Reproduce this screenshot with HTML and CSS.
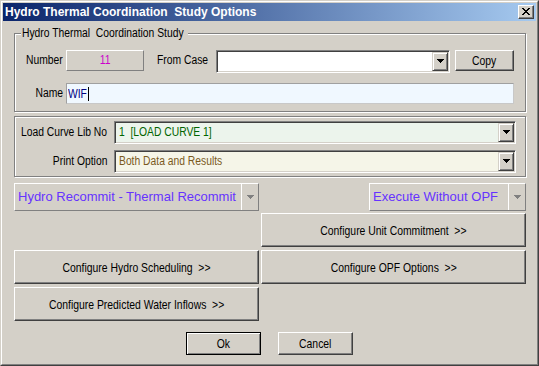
FILE: index.html
```html
<!DOCTYPE html>
<html>
<head>
<meta charset="utf-8">
<title>Hydro Thermal Coordination Study Options</title>
<link rel="stylesheet" href="styles.css">
</head>
<body>
<div class="window">
  <div class="frame">
    <div class="titlebar">
      <span class="title">Hydro Thermal Coordination  Study Options</span>
      <div class="close">
        <svg width="8" height="7" viewBox="0 0 8 7" shape-rendering="crispEdges"><path d="M0 0h2v1H0zM6 0h2v1H6zM1 1h2v1H1zM5 1h2v1H5zM2 2h4v1H2zM3 3h2v1H3zM2 4h4v1H2zM1 5h2v1H1zM5 5h2v1H5zM0 6h2v1H0zM6 6h2v1H6z" fill="#000"/></svg>
      </div>
    </div>
    <div class="content">
      <div class="group g1">
        <span class="legend"><span class="nx ol">Hydro Thermal  Coordination Study</span></span>
        <div class="row r1">
          <span class="lbl lbl-left"><span class="nx or">Number</span></span>
          <div class="static"><span class="nx oc">11</span></div>
          <span class="lbl lbl-from"><span class="nx ol">From Case</span></span>
          <div class="combo case-combo">
            <div class="field white"></div>
            <div class="dd"><svg width="7" height="4" viewBox="0 0 7 4" shape-rendering="crispEdges"><path d="M0 0h7v1H0zM1 1h5v1H1zM2 2h3v1H2zM3 3h1v1H3z" fill="#000"/></svg></div>
          </div>
          <div class="btn copy"><span class="nb oc">Copy</span></div>
        </div>
        <div class="row r2">
          <span class="lbl lbl-left"><span class="nx or">Name</span></span>
          <div class="textbox"><span class="nx ol typed">WIF</span><span class="caret"></span></div>
        </div>
      </div>

      <div class="group g2">
        <div class="row r3">
          <span class="lbl lbl-wide"><span class="nx or">Load Curve Lib No</span></span>
          <div class="combo wide-combo">
            <div class="field green"><span class="nx ol">1  [LOAD CURVE 1]</span></div>
            <div class="dd"><svg width="7" height="4" viewBox="0 0 7 4" shape-rendering="crispEdges"><path d="M0 0h7v1H0zM1 1h5v1H1zM2 2h3v1H2zM3 3h1v1H3z" fill="#000"/></svg></div>
          </div>
        </div>
        <div class="row r4">
          <span class="lbl lbl-wide"><span class="nx or">Print Option</span></span>
          <div class="combo wide-combo">
            <div class="field yellow"><span class="nx ol">Both Data and Results</span></div>
            <div class="dd"><svg width="7" height="4" viewBox="0 0 7 4" shape-rendering="crispEdges"><path d="M0 0h7v1H0zM1 1h5v1H1zM2 2h3v1H2zM3 3h1v1H3z" fill="#000"/></svg></div>
          </div>
        </div>
      </div>

      <div class="flatrow">
        <div class="flat hydro">
          <span class="flat-text">Hydro Recommit - Thermal Recommit</span>
          <div class="flat-arrow"><svg width="7" height="4" viewBox="0 0 7 4" shape-rendering="crispEdges"><path d="M0 0h7v1H0zM1 1h5v1H1zM2 2h3v1H2zM3 3h1v1H3z" fill="#808080"/></svg></div>
        </div>
        <div class="flat exec">
          <span class="flat-text">Execute Without OPF</span>
          <div class="flat-arrow"><svg width="7" height="4" viewBox="0 0 7 4" shape-rendering="crispEdges"><path d="M0 0h7v1H0zM1 1h5v1H1zM2 2h3v1H2zM3 3h1v1H3z" fill="#808080"/></svg></div>
        </div>
      </div>

      <div class="cfg-grid">
        <div class="btn cfg cfg-unit"><span class="nb oc">Configure Unit Commitment  &gt;&gt;</span></div>
        <div class="btn cfg"><span class="nb oc">Configure Hydro Scheduling  &gt;&gt;</span></div>
        <div class="btn cfg"><span class="nb oc">Configure OPF Options  &gt;&gt;</span></div>
        <div class="btn cfg"><span class="nb oc">Configure Predicted Water Inflows  &gt;&gt;</span></div>
      </div>

      <div class="actions">
        <div class="btn action default"><span class="nb oc">Ok</span></div>
        <div class="btn action"><span class="nb oc">Cancel</span></div>
      </div>
    </div>
  </div>
</div>
</body>
</html>
```

FILE: styles.css
```css
html, body {
  margin: 0;
  padding: 0;
  background: #d4d0c8;
}

.window {
  width: 539px;
  height: 366px;
  box-sizing: border-box;
  border: 1px solid;
  border-color: #d4d0c8 #404040 #404040 #d4d0c8;
  background: #d4d0c8;
  font-family: "Liberation Sans", Arial, sans-serif;
  font-size: 12px;
  color: #000;
}

/* narrow (MS Sans Serif-like) text */
.nx, .nb {
  display: inline-block;
  white-space: pre;
  flex: none;
}

.nx {
  font-size: 12px;
  transform: scaleX(0.86);
}

.nb {
  font-size: 13px;
  transform: scaleX(0.8);
}

.ol { transform-origin: left center; }
.or { transform-origin: right center; }
.oc { transform-origin: center center; }

.frame {
  height: 100%;
  box-sizing: border-box;
  border: 1px solid;
  border-color: #fff #808080 #808080 #fff;
  padding: 1px;
  display: flex;
  flex-direction: column;
}

.titlebar {
  height: 18px;
  flex: none;
  display: flex;
  align-items: center;
  justify-content: space-between;
  padding: 0 2px 0 2px;
  background: linear-gradient(to right, #0a246a, #a6caf0);
}

.title {
  font-weight: bold;
  font-size: 12px;
  color: #fff;
  white-space: pre;
  line-height: 18px;
}

.close {
  width: 16px;
  height: 14px;
  box-sizing: border-box;
  background: #d4d0c8;
  border: 1px solid;
  border-color: #fff #404040 #404040 #fff;
  box-shadow: inset -1px -1px 0 #808080;
  display: flex;
  align-items: center;
  justify-content: center;
  padding: 0 1px 1px 0;
}

.close svg, .dd svg, .flat-arrow svg {
  display: block;
}

.content {
  padding: 12px 10px 0 11px;
}

/* group frames */
.group {
  position: relative;
  box-sizing: border-box;
  border: 1px solid #808080;
  box-shadow: inset 1px 1px 0 #fff, 1px 1px 0 #fff;
}

.g1 {
  height: 79px;
  padding-top: 16px;
}

.legend {
  position: absolute;
  left: 6px;
  top: -8px;
  width: 166px;
  padding-left: 1px;
  background: #d4d0c8;
  white-space: pre;
  line-height: 15px;
}

.row {
  display: flex;
  align-items: flex-start;
}

.lbl {
  line-height: 21px;
  white-space: pre;
  display: flex;
  flex: none;
}

.lbl-left {
  width: 48px;
  justify-content: flex-end;
  margin-right: 3px;
}

.static {
  width: 78px;
  height: 21px;
  box-sizing: border-box;
  border: 1px solid;
  border-color: #fff #808080 #808080 #fff;
  color: #cc00cc;
  text-align: center;
  line-height: 19px;
}

.lbl-from {
  width: 59px;
  margin-left: 13px;
}

.combo {
  height: 23px;
  box-sizing: border-box;
  border: 1px solid;
  border-color: #808080 #fff #fff #808080;
  box-shadow: inset 1px 1px 0 #404040, inset -1px -1px 0 #d4d0c8;
  padding: 1px;
  display: flex;
  flex: none;
}

.case-combo {
  width: 234px;
}

.field {
  flex: 1;
  line-height: 19px;
  padding-left: 3px;
  white-space: pre;
  overflow: hidden;
}

.field.white { background: #fff; }
.field.green { background: #ecf4ec; color: #006400; }
.field.yellow { background: #f5f5e8; color: #7a5a1e; }

.dd {
  width: 16px;
  height: 19px;
  box-sizing: border-box;
  background: #d4d0c8;
  border: 1px solid;
  border-color: #d4d0c8 #404040 #404040 #d4d0c8;
  box-shadow: inset 1px 1px 0 #fff, inset -1px -1px 0 #808080;
  display: flex;
  align-items: center;
  justify-content: center;
  padding-bottom: 1px;
}

.btn {
  box-sizing: border-box;
  background: #d4d0c8;
  border: 1px solid;
  border-color: #fff #404040 #404040 #fff;
  box-shadow: inset -1px -1px 0 #808080;
  display: flex;
  align-items: center;
  justify-content: center;
  white-space: pre;
}

.copy {
  width: 59px;
  height: 21px;
  margin-left: 5px;
}

.r2 {
  margin-top: 10px;
}

.textbox {
  width: 448px;
  height: 21px;
  box-sizing: border-box;
  border: 1px solid;
  border-color: #a0a0a0 #c8c8c8 #c8c8c8 #a0a0a0;
  background: #f0f8ff;
  display: flex;
  align-items: center;
  color: #000080;
  padding-left: 1px;
}

.typed {
  width: 19px;
}

.caret {
  width: 1px;
  height: 14px;
  background: #000;
  margin-left: 1px;
}

.g2 {
  margin-top: 4px;
  height: 61px;
  padding-top: 4px;
}

.lbl-wide {
  width: 92px;
  justify-content: flex-end;
  margin-right: 7px;
  line-height: 23px;
}

.wide-combo {
  width: 402px;
}

.r4 {
  margin-top: 6px;
}

.flatrow {
  margin-top: 6px;
  height: 28px;
  display: flex;
  justify-content: space-between;
}

.flat {
  box-sizing: border-box;
  height: 28px;
  border: 1px solid;
  border-color: #fff #808080 #808080 #fff;
  display: flex;
  align-items: stretch;
}

.hydro { width: 245px; }
.exec { width: 157px; }

.flat-text {
  flex: 1;
  font-size: 13px;
  color: #6633ff;
  line-height: 26px;
  padding-left: 3px;
  white-space: pre;
}

.flat-arrow {
  width: 16px;
  border-left: 1px solid #fff;
  display: flex;
  align-items: center;
  justify-content: center;
}

.cfg-grid {
  margin-top: 2px;
  display: grid;
  grid-template-columns: 245px 265px;
  grid-auto-rows: 34px;
  column-gap: 2px;
  row-gap: 3px;
}

.cfg-unit {
  grid-column: 2;
}

.actions {
  margin-top: 11px;
  display: flex;
  gap: 17px;
  padding-left: 172px;
}

.action {
  width: 75px;
  height: 23px;
}

.action.default {
  border-color: #000;
  box-shadow: inset 1px 1px 0 #fff, inset -1px -1px 0 #808080;
}
```
